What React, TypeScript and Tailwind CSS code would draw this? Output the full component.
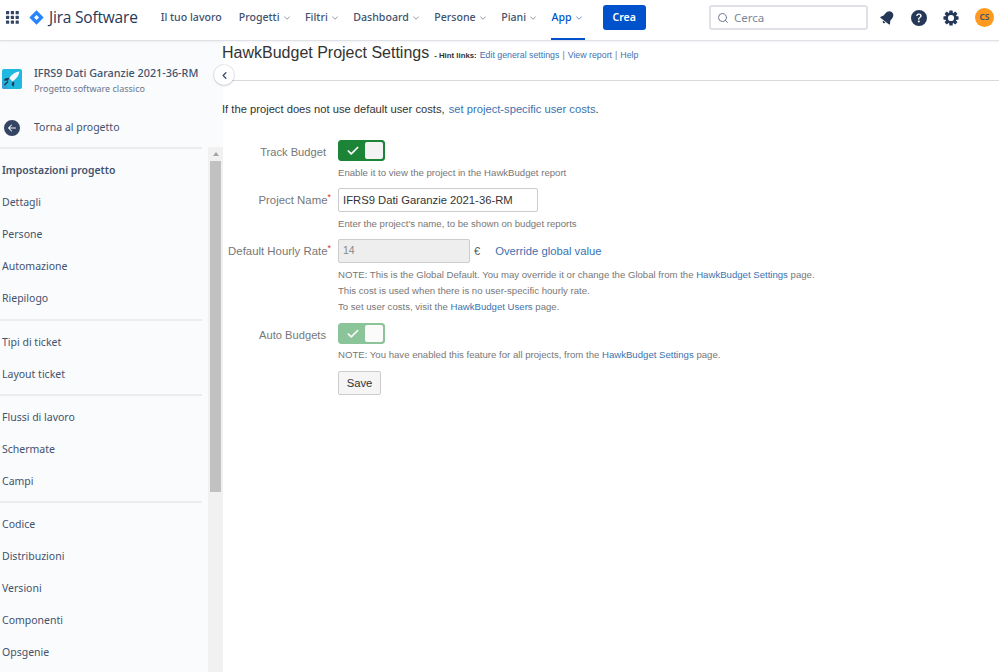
import { ChevronDown, ChevronLeft, Search, Check } from "lucide-react";
import { BsArrowLeftCircleFill, BsQuestionCircleFill } from "react-icons/bs";

const navItems = [
  { label: "Il tuo lavoro" },
  { label: "Progetti", menu: true },
  { label: "Filtri", menu: true },
  { label: "Dashboard", menu: true },
  { label: "Persone", menu: true },
  { label: "Piani", menu: true },
  { label: "App", menu: true, active: true },
];

const sideGroups = [
  ["Dettagli", "Persone", "Automazione", "Riepilogo"],
  ["Tipi di ticket", "Layout ticket"],
  ["Flussi di lavoro", "Schermate", "Campi"],
  ["Codice", "Distribuzioni", "Versioni", "Componenti", "Opsgenie"],
];

function AppGrid() {
  return (
    <svg width="13" height="13" viewBox="0 0 13 13" fill="#344563">
      {[0, 4.8, 9.6].map((y) =>
        [0, 4.8, 9.6].map((x) => <rect key={`${x}-${y}`} x={x} y={y} width="3.2" height="3.2" rx="0.5" />)
      )}
    </svg>
  );
}

function JiraMark() {
  return (
    <svg width="15" height="15" viewBox="0 0 15 15">
      <path d="M7.5 0.3 14.7 7.5 7.5 14.7 0.3 7.5Z" fill="#2684ff" />
      <path d="M7.5 5 10 7.5 7.5 10 5 7.5Z" fill="#fff" />
    </svg>
  );
}

function BellIcon() {
  return (
    <svg width="15" height="15" viewBox="0 0 15 15" fill="#253858">
      <g transform="rotate(38 7.5 7.5)">
        <path d="M7.5 0.6C4.7 0.6 3.3 2.8 3.3 5.4V8.4L1.6 11V12H13.4V11L11.7 8.4V5.4C11.7 2.8 10.3 0.6 7.5 0.6Z" />
        <path d="M6 12.8H9C9 13.8 8.3 14.4 7.5 14.4S6 13.8 6 12.8Z" />
      </g>
    </svg>
  );
}

function GearIcon() {
  return (
    <svg width="16" height="16" viewBox="0 0 16 16" fill="#253858">
      {[0, 45, 90, 135, 180, 225, 270, 315].map((a) => (
        <rect key={a} x="6.3" y="0.4" width="3.4" height="3.2" rx="0.6" transform={`rotate(${a} 8 8)`} />
      ))}
      <circle cx="8" cy="8" r="4.4" fill="none" stroke="#253858" strokeWidth="2.6" />
    </svg>
  );
}

function ProjectIcon() {
  return (
    <svg width="20" height="20" viewBox="0 0 20 20" className="rounded-[2px]">
      <rect width="20" height="20" fill="#1fb8de" />
      <path d="M0 12 8 20H0Z" fill="#2ea3d8" />
      <path d="M17.5 2.5C13.5 2.8 10.5 5 7.2 9L10.5 12.5C14.5 9.5 17 6.5 17.5 2.5Z" fill="#f4f8fb" />
      <path d="M7.5 8.5 3 9.5 1.5 11.5 6 11.8ZM10.8 12.2 9.5 15.5 11.5 18 12.5 14Z" fill="#253858" />
      <path d="M6 12.5 2.5 16" stroke="#253858" strokeWidth="1.6" />
    </svg>
  );
}

function Toggle({ muted }: { muted?: boolean }) {
  return (
    <div
      className={`flex w-[47px] h-[21px] rounded-[3px] border p-px ${
        muted ? "border-[#8cc49a] bg-[#8cc49a]" : "border-[#1b8436] bg-[#1b8436]"
      }`}
    >
      <div className="flex w-[25px] items-center justify-center">
        <Check size={14} strokeWidth={3} className={muted ? "text-[#f4faf5]" : "text-white"} />
      </div>
      <div className={`flex-1 rounded-[2px] ${muted ? "bg-[#fbfbfb]" : "bg-[#f3f3f3]"}`} />
    </div>
  );
}

function FormRow({
  label,
  required,
  labelClass,
  children,
}: {
  label: string;
  required?: boolean;
  labelClass?: string;
  children: React.ReactNode;
}) {
  return (
    <div className="flex">
      <div
        className={`w-[104px] shrink-0 whitespace-nowrap text-right text-[#777] ${
          required ? "text-[11.4px]" : "text-[11.15px]"
        } ${labelClass ?? ""}`}
      >
        {label}
        {required && <sup className="-mr-[5px] text-[9px] leading-none text-[#d9302c]">*</sup>}
      </div>
      <div className="ml-[12px] flex-1">{children}</div>
    </div>
  );
}

function Help({ children, className }: { children: React.ReactNode; className?: string }) {
  return <p className={`text-[9.6px] leading-[16px] text-[#777] ${className ?? ""}`}>{children}</p>;
}

function Sidebar() {
  return (
    <aside className="flex w-[223px] shrink-0 flex-col bg-[#fafbfc] font-['Noto_Sans',sans-serif]">
      <div className="h-[106px] shrink-0">
        <div className="flex items-start gap-[12px] pl-[2px] pt-[24px]">
          <div className="mt-[4px]">
            <ProjectIcon />
          </div>
          <div>
            <div className="text-[10.8px] font-medium leading-[15px] text-[#42526e]">IFRS9 Dati Garanzie 2021-36-RM</div>
            <div className="mt-[2px] text-[9px] leading-[13px] text-[#6b778c]">Progetto software classico</div>
          </div>
        </div>
        <div className="mt-[25px] flex items-center gap-[14px] pl-[4px] text-[10.5px] text-[#42526e]">
          <BsArrowLeftCircleFill size={16} className="text-[#344563]" />
          Torna al progetto
        </div>
      </div>
      <div className="flex min-h-0 flex-1">
        <nav className="w-[202px] shrink-0 text-[10.5px] text-[#42526e]">
          <div className="border-t-2 border-[#ebecf0] pt-[6px]">
            <div className="flex h-[32px] items-center pl-[2px] text-[10.4px] font-semibold">Impostazioni progetto</div>
            {sideGroups[0].map((item) => (
              <div key={item} className="flex h-[32px] items-center pl-[2px]">
                {item}
              </div>
            ))}
          </div>
          {sideGroups.slice(1).map((group, i) => (
            <div key={group[0]} className={`border-t-2 border-[#ebecf0] pt-[6px] ${i === 0 ? "mt-[4px]" : "mt-[3px]"}`}>
              {group.map((item) => (
                <div key={item} className="flex h-[32px] items-center pl-[2px]">
                  {item}
                </div>
              ))}
            </div>
          ))}
        </nav>
        <div className="ml-[6px] flex flex-1 flex-col items-center bg-[#f1f1f1] pt-[5px]">
          <div className="h-0 w-0 border-x-[3px] border-b-[4px] border-x-transparent border-b-[#a3a3a3]" />
          <div className="mt-[5px] h-[331px] w-[11px] bg-[#c1c1c1]" />
        </div>
      </div>
    </aside>
  );
}

function SettingsPage() {
  return (
    <main className="-ml-px min-w-0 flex-1 font-['Liberation_Sans',sans-serif]">
      <div className="flex h-[40px] items-baseline whitespace-nowrap border-b border-[#d9d9d9] pt-[2px]">
        <h1 className="text-[16px] font-normal leading-[20px] text-[#333]">HawkBudget Project Settings</h1>
        <span className="ml-[5px] text-[7.8px] font-bold text-[#333]">- Hint links:</span>
        <a className="ml-[3px] text-[8.8px] text-[#3b73af]">Edit general settings</a>
        <span className="mx-[3px] text-[8.8px] text-[#777]">|</span>
        <a className="text-[8.8px] text-[#3b73af]">View report</a>
        <span className="mx-[3px] text-[8.8px] text-[#777]">|</span>
        <a className="text-[8.8px] text-[#3b73af]">Help</a>
      </div>
      <p className="mt-[20px] text-[11.2px] leading-[17px] text-[#333]">
        If the project does not use default user costs,{" "}
        <a className="ml-[1px] text-[#3b73af]">set project-specific user costs</a>.
      </p>

      <div className="mt-[22px] flex flex-col">
        <FormRow label="Track Budget" labelClass="pt-[4px] leading-[17px]">
          <Toggle />
          <Help className="mt-[4px]">Enable it to view the project in the HawkBudget report</Help>
        </FormRow>
        <FormRow label="Project Name" required labelClass="mt-[7px] pt-[4px] leading-[17px]">
          <div className="mt-[7px] flex h-[24px] w-[200px] items-center rounded-[2px] border border-[#ccc] px-[4px] text-[11.27px] text-[#333]">
            IFRS9 Dati Garanzie 2021-36-RM
          </div>
          <Help className="mt-[4px]">Enter the project's name, to be shown on budget reports</Help>
        </FormRow>
        <FormRow label="Default Hourly Rate" required labelClass="mt-[7px] pt-[4px] leading-[17px]">
          <div className="mt-[7px] flex items-center">
            <div className="flex h-[24px] w-[132px] items-center rounded-[2px] border border-[#ccc] bg-[#eee] px-[4px] text-[10.5px] text-[#888]">
              14
            </div>
            <span className="ml-[4px] text-[11px] text-[#555]">€</span>
            <a className="ml-[15px] text-[11.25px] text-[#3b73af]">Override global value</a>
          </div>
          <Help className="mt-[4px]">
            NOTE: This is the Global Default. You may override it or change the Global from the{" "}
            <a className="text-[#3b73af]">HawkBudget Settings</a> page.
          </Help>
          <Help>This cost is used when there is no user-specific hourly rate.</Help>
          <Help>
            To set user costs, visit the <a className="text-[#3b73af]">HawkBudget Users</a> page.
          </Help>
        </FormRow>
        <FormRow label="Auto Budgets" labelClass="mt-[8px] pt-[4px] leading-[17px]">
          <div className="mt-[8px]">
            <Toggle muted />
          </div>
          <Help className="mt-[3px]">
            NOTE: You have enabled this feature for all projects, from the{" "}
            <a className="text-[#3b73af]">HawkBudget Settings</a> page.
          </Help>
          <button className="mt-[8px] h-[24px] w-[43px] rounded-[2px] border border-[#ccc] bg-[#f5f5f5] text-[11.25px] text-[#333]">
            Save
          </button>
        </FormRow>
      </div>
    </main>
  );
}

export default function App() {
  return (
    <div className="flex h-[672px] w-[999px] flex-col overflow-hidden bg-white">
      <header className="relative z-10 flex h-[41px] shrink-0 items-start border-b border-[#dfe1e6] bg-white pl-[6px] pr-[5px] pt-[5px] font-['Noto_Sans',sans-serif] shadow-[0_1px_2px_rgba(9,30,66,0.06)]">
        <div className="flex h-[25px] items-center">
          <AppGrid />
        </div>
        <div className="ml-[10px] flex h-[25px] items-center gap-[5px]">
          <JiraMark />
          <span className="font-['Open_Sans',sans-serif] text-[15.5px] leading-none tracking-[-0.2px] text-[#253858]">
            Jira Software
          </span>
        </div>
        <nav className="ml-[22px] flex gap-[11.5px] text-[10.6px] font-medium text-[#42526e]">
          {navItems.map((item) => (
            <div
              key={item.label}
              className={`flex h-[35px] items-center gap-[2px] border-b-2 px-px pb-[8px] ${
                item.active ? "border-b-[#0052cc] text-[#0052cc]" : "border-b-transparent"
              } ${item.menu ? "" : "mr-[3.5px]"}`}
            >
              {item.label}
              {item.menu && <ChevronDown size={10} strokeWidth={2} className="opacity-70" />}
            </div>
          ))}
        </nav>
        <button className="ml-[18px] h-[25px] w-[43px] rounded-[3px] bg-[#0052cc] text-[10.5px] font-semibold text-white">
          Crea
        </button>
        <div className="ml-auto flex h-[25px] w-[159px] items-center gap-[5px] rounded-[3px] border-2 border-[#dfe1e6] pl-[6px] text-[11.5px] text-[#7a869a]">
          <Search size={12} strokeWidth={2} className="text-[#6b778c]" />
          Cerca
        </div>
        <div className="ml-[12px] flex h-[25px] items-center">
          <BellIcon />
          <BsQuestionCircleFill size={16} className="ml-[16px] text-[#253858]" />
          <div className="ml-[16px]">
            <GearIcon />
          </div>
          <div className="ml-[16px] flex h-[19px] w-[19px] items-center justify-center rounded-full bg-[#ff991f] text-[8.5px] font-semibold text-[#42526e]">
            CS
          </div>
        </div>
      </header>
      <div className="relative flex min-h-0 flex-1">
        <Sidebar />
        <SettingsPage />
        <button className="absolute left-[214px] top-[24px] flex h-[20px] w-[20px] items-center justify-center rounded-full bg-white shadow-[0_0_0_1px_rgba(9,30,66,0.08),0_1px_2px_rgba(9,30,66,0.15)]">
          <ChevronLeft size={11} strokeWidth={3} className="text-[#42526e]" />
        </button>
      </div>
    </div>
  );
}
